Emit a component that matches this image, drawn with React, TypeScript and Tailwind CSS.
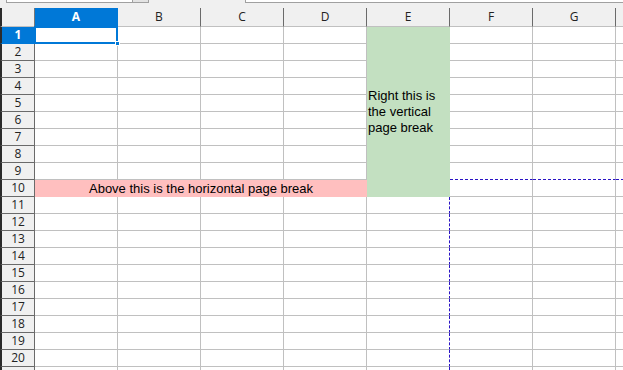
import React from 'react'

const cols = ['A', 'B', 'C', 'D', 'E', 'F', 'G', 'H']
const rows = Array.from({ length: 21 }, (_, i) => i + 1)

const gridCols = 'grid-cols-[35px_83px_83px_83px_83px_83px_83px_83px_83px]'

function Cell({ r, c }: { r: number; c: string }) {
  // page break: below row 9 right of column E, and right of E below row 10
  const hBreak = r === 9 && (c === 'F' || c === 'G' || c === 'H')
  const vBreak = r > 10 && c === 'E'
  return (
    <div
      className={`h-[17px] bg-white border-b border-r ${
        hBreak ? 'border-b-[#2a14c4] border-dashed border-r-[#c0c0c0] [border-right-style:solid]' : 'border-b-[#c0c0c0]'
      } ${vBreak ? 'border-r-[#2a14c4] border-dashed border-b-[#c0c0c0] [border-bottom-style:solid]' : hBreak ? '' : 'border-r-[#c0c0c0]'}`}
    />
  )
}

export default function App() {
  return (
    <div className="w-[623px] h-[370px] overflow-hidden bg-[#f0f0f0] font-['Liberation_Sans',Arial,sans-serif]">
      {/* formula bar remnants */}
      <div className="h-[8px] flex items-start">
        <div className="ml-[6px] w-[127px] h-[3px] bg-white border-b border-l border-r border-[#a0a0a0]" />
        <div className="w-[16px] h-[3px] bg-[#e3e3e3] border-b border-r border-[#a0a0a0]" />
        <div className="ml-[96px] flex-1 h-[3px] bg-white border-b border-l border-[#a0a0a0]" />
      </div>

      <div className="border-l-2 border-[#2b2b2b]">
        <div className={`grid ${gridCols} -ml-[2px]`}>
          {/* header row */}
          <div className="h-[19px] border-l-2 border-[#2b2b2b] border-r border-r-[#777] border-b border-b-[#c0c0c0] bg-[#f0f0f0]" />
          {cols.map(c => (
            <div
              key={c}
              className={`h-[19px] flex items-center justify-center text-[12px] font-['Open_Sans',sans-serif] border-r border-b ${
                c === 'A'
                  ? 'bg-[#0078d7] text-white font-bold border-r-[#0078d7] border-b-[#0078d7]'
                  : 'bg-[#f0f0f0] text-[#222] border-r-[#6a6a6a] border-b-[#c0c0c0]'
              }`}
            >
              {c}
            </div>
          ))}

          {rows.map(r => (
            <React.Fragment key={r}>
              <div
                className={`h-[17px] border-l-2 border-[#2b2b2b] flex items-center justify-center text-[12px] font-['Open_Sans',sans-serif] border-r border-b ${
                  r === 1
                    ? 'bg-[#0078d7] text-white font-bold border-r-[#0078d7] border-b-[#0078d7]'
                    : 'bg-[#f0f0f0] text-[#222] border-r-[#6a6a6a] border-b-[#6a6a6a]'
                }`}
              >
                {r}
              </div>
              {cols.map(c => {
                if (r === 1 && c === 'E') {
                  return (
                    <div
                      key={c}
                      className="row-span-10 bg-[#c3e0c1] flex items-center pl-[1px] text-[13px] leading-[16px] text-black"
                    >
                      Right this is the vertical page break
                    </div>
                  )
                }
                if (r <= 10 && c === 'E') return null
                if (r === 10 && c === 'A') {
                  return (
                    <div
                      key={c}
                      className="col-span-4 h-[17px] bg-[#ffbfbf] flex items-center justify-center text-[13px] text-black"
                    >
                      Above this is the horizontal page break
                    </div>
                  )
                }
                if (r === 10 && (c === 'B' || c === 'C' || c === 'D')) return null
                if (r === 1 && c === 'A') {
                  return (
                    <div key={c} className="relative h-[17px] bg-white border-b border-r border-[#c0c0c0]">
                      <div className="absolute -top-[1px] -left-[1px] w-[84px] h-[18px] border-2 border-[#0078d7]" />
                      <div className="absolute -right-[3px] -bottom-[3px] w-[5px] h-[5px] bg-[#0078d7] border border-white" />
                    </div>
                  )
                }
                return <Cell key={c} r={r} c={c} />
              })}
            </React.Fragment>
          ))}
        </div>
      </div>
    </div>
  )
}
